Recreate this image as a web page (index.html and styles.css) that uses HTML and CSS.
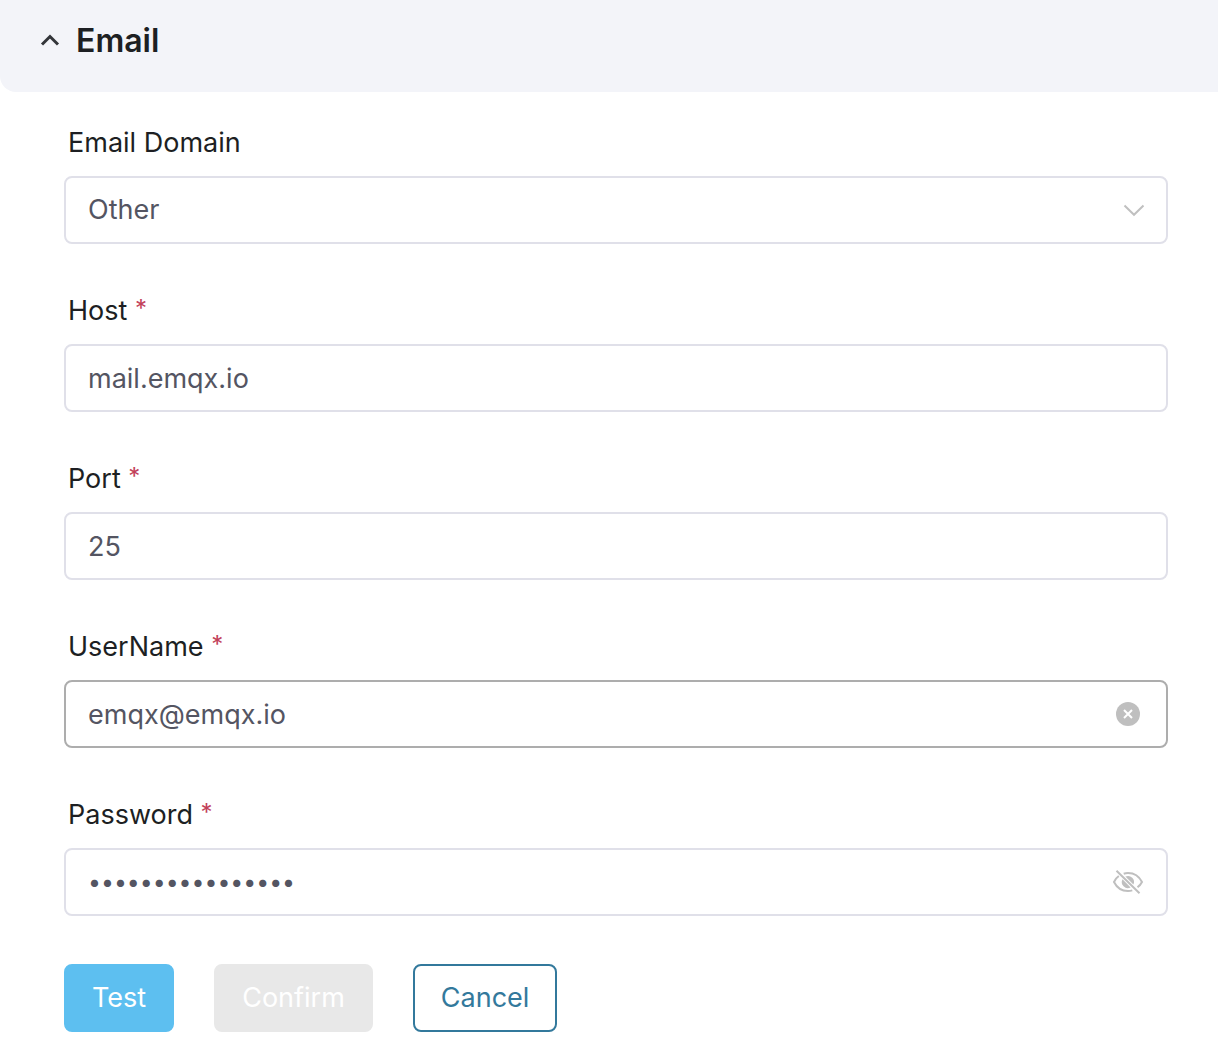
FILE: index.html
```html
<!DOCTYPE html>
<html lang="en">
<head>
<meta charset="utf-8">
<meta name="viewport" content="width=device-width, initial-scale=1">
<title>Email settings</title>
<link rel="stylesheet" href="styles.css">
</head>
<body>
<main>
  <header class="panel-header">
    <button class="panel-toggle" type="button" aria-expanded="true" aria-controls="email-form">
      <svg class="toggle-icon" viewBox="0 0 20 14" aria-hidden="true"><path d="M2 10.500L10 2.500L18 10.500"/></svg>
      <span>Email</span>
    </button>
  </header>
  <form class="form" id="email-form">
    <div class="field">
      <label for="domain">Email Domain</label>
      <div class="control">
        <select id="domain"><option>Other</option></select>
        <svg class="icon-arrow" viewBox="0 0 22 14" aria-hidden="true"><path d="M1.500 2.500L11 11.800L20.500 2.500"/></svg>
      </div>
    </div>
    <div class="field">
      <label for="host">Host <span class="required">*</span></label>
      <div class="control"><input id="host" type="text" value="mail.emqx.io"></div>
    </div>
    <div class="field">
      <label for="port">Port <span class="required">*</span></label>
      <div class="control"><input id="port" type="text" value="25"></div>
    </div>
    <div class="field">
      <label for="username">UserName <span class="required">*</span></label>
      <div class="control control-active">
        <input id="username" type="text" value="emqx@emqx.io">
        <button class="icon-button" type="button" aria-label="Clear">
          <svg class="icon-clear" viewBox="0 0 24 24" aria-hidden="true"><circle cx="12" cy="12" r="12"/><path d="M8 8l8 8M16 8l-8 8"/></svg>
        </button>
      </div>
    </div>
    <div class="field">
      <label for="password">Password <span class="required">*</span></label>
      <div class="control">
        <input id="password" class="password" type="password" value="emqx-public-1234">
        <button class="icon-button" type="button" aria-label="Show password">
          <svg class="icon-eye" viewBox="0 0 32 26" aria-hidden="true">
            <path d="M4.500 1.800L27.500 24.300M6.800 7Q3.500 9.300 2 13Q6.500 22 16 22Q18.300 22 20.300 21.400M11.700 4.700Q13.700 4 16 4Q25.500 4 30 13Q28.500 16 25.500 18.300"/>
            <path class="iris" d="M10.500 10.300A6 6 0 0 0 18.600 18.400ZM13.400 7.600A6 6 0 0 1 21.400 15.600Z"/>
          </svg>
        </button>
      </div>
    </div>
    <div class="actions">
      <button class="button button-test" type="button">Test</button>
      <button class="button button-confirm" type="submit" disabled>Confirm</button>
      <button class="button button-cancel" type="button">Cancel</button>
    </div>
  </form>
</main>
</body>
</html>
```
FILE: styles.css
```css
* { box-sizing: border-box; }
body { margin: 0; background: #fff; color: #1d1f23; font: 27px/38px Inter, "Liberation Sans", sans-serif; }
button, input, select { font: inherit; }
.panel-header { padding: 20px 40px 30px; background: #f3f4f9; border-bottom-left-radius: 16px; }
.panel-toggle { display: flex; align-items: center; gap: 16px; padding: 0; border: 0; background: none; color: #1d1f23; font-size: 32px; line-height: 42px; font-weight: 600; }
.toggle-icon { width: 20px; height: 14px; fill: none; stroke: #33353a; stroke-width: 3; }
.form { padding: 32px 50px 28px 64px; }
.field { margin-bottom: 48px; }
.field label { display: block; margin: 0 4px 14px; }
.required { color: #c2415a; font-size: 24px; line-height: 24px; vertical-align: 3px; }
.control { display: flex; align-items: center; position: relative; height: 68px; border: 2px solid #e0e0e9; border-radius: 8px; }
.control-active { border-color: #adadad; }
.control input, .control select { flex: 1; min-width: 0; height: 100%; padding: 0 22px; border: 0; outline: 0; background: transparent; color: #545562; appearance: none; }
.control .password { font-size: 23px; }
.icon-arrow { position: absolute; right: 21px; width: 22px; height: 14px; pointer-events: none; fill: none; stroke: #c0c0c0; stroke-width: 2; }
.icon-button { display: flex; flex: none; justify-content: center; width: 32px; margin-right: 22px; padding: 0; border: 0; background: none; }
.icon-clear { width: 24px; height: 24px; fill: #bfbfbf; stroke: #fff; stroke-width: 2; }
.icon-clear circle { stroke: none; }
.icon-eye { width: 32px; height: 26px; fill: none; stroke: #bfbfbf; stroke-width: 2; }
.iris { fill: #bfbfbf; stroke: none; }
.actions { display: flex; gap: 40px; }
.button { height: 68px; padding: 0 26px; border: 2px solid; border-radius: 8px; }
.button-test { background: #5dbff0; border-color: #5dbff0; color: #fff; }
.button-confirm { background: #e8e8e8; border-color: #e8e8e8; color: #fff; }
.button-cancel { background: #fff; border-color: #33799c; color: #33799c; }
```
